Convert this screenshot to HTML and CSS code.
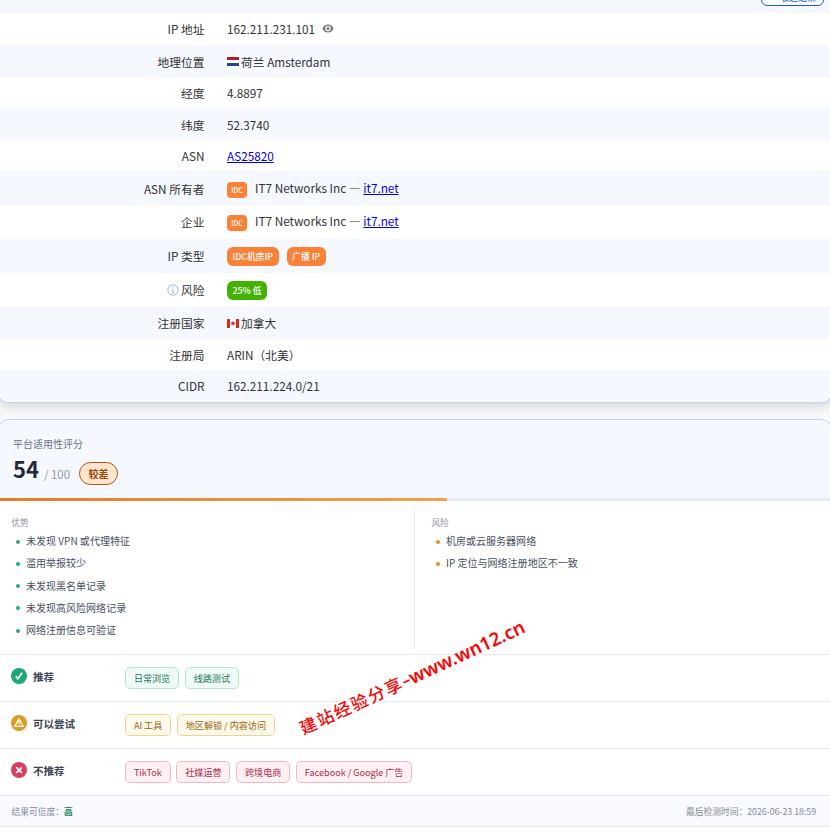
FILE: index.html
```html
<!DOCTYPE html>
<html lang="zh-CN">
<head>
<meta charset="utf-8">
<title>IP 信息</title>
<link rel="stylesheet" href="styles.css">
</head>
<body>
<section class="card info">
  <div class="topbar"><button class="top-btn"><span class="top-icon">✕</span>收起结果</button></div>
  <dl class="rows">
    <div class="row up"><dt>IP 地址</dt><dd>162.211.231.101<svg class="eye" viewBox="0 0 24 18"><path fill="#777" fill-rule="evenodd" d="M12 1C7 1 2.700 4.100 1 9c1.700 4.900 6 8 11 8s9.300-3.100 11-8c-1.700-4.900-6-8-11-8zm0 13.500a5.500 5.500 0 1 1 0-11 5.500 5.500 0 0 1 0 11zm0-2.500a3 3 0 1 0 0-6 3 3 0 0 0 0 6z"/></svg></dd></div>
    <div class="row"><dt>地理位置</dt><dd><svg class="flag" viewBox="0 0 12 9"><path fill="#ae1c28" d="M0 0h12v3H0z"/><path fill="#fff" d="M0 3h12v3H0z"/><path fill="#21468b" d="M0 6h12v3H0z"/></svg>荷兰 Amsterdam</dd></div>
    <div class="row short"><dt>经度</dt><dd>4.8897</dd></div>
    <div class="row"><dt>纬度</dt><dd>52.3740</dd></div>
    <div class="row short"><dt>ASN</dt><dd><a href="#">AS25820</a></dd></div>
    <div class="row tall"><dt>ASN 所有者</dt><dd class="owner"><span class="idc">IDC</span><span>IT7 Networks Inc — <a href="#">it7.net</a></span></dd></div>
    <div class="row tall up"><dt>企业</dt><dd class="owner"><span class="idc">IDC</span><span>IT7 Networks Inc — <a href="#">it7.net</a></span></dd></div>
    <div class="row tall up"><dt>IP 类型</dt><dd class="tags"><span class="tag">IDC机房IP</span><span class="tag">广播 IP</span></dd></div>
    <div class="row tall up"><dt><svg class="hint" viewBox="0 0 12 12"><circle cx="6" cy="6" r="5.200" fill="none" stroke="#82a4f8" stroke-width=".8"/><path d="M6 5v4M5 5h1M5 9h2" stroke="#82a4f8" stroke-width=".8"/><circle cx="6" cy="3" r=".6" fill="#82a4f8"/></svg>风险</dt><dd><span class="tag low">25% 低</span></dd></div>
    <div class="row up"><dt>注册国家</dt><dd><svg class="flag ca" viewBox="0 0 12 9"><path fill="#fff" d="M0 0h12v9H0z"/><path fill="#d52b1e" d="M0 0h3v9H0zM9 0h3v9H9zM6 2l.7 1.300.8-.3-.1 1 1 .3-1.400 1.500H6.200V7h-.4V5.800H5L3.600 4.300l1-.3-.1-1 .8.300z"/></svg>加拿大</dd></div>
    <div class="row short"><dt>注册局</dt><dd>ARIN（北美）</dd></div>
    <div class="row up"><dt>CIDR</dt><dd>162.211.224.0/21</dd></div>
  </dl>
</section>

<section class="card score">
  <header class="score-head">
    <div class="score-title">平台适用性评分</div>
    <div class="score-line"><strong>54</strong><span class="of">/ 100</span><span class="grade">较差</span></div>
  </header>
  <div class="bar"><div class="fill"></div></div>
  <div class="reasons">
    <div class="col">
      <h3>优势</h3>
      <ul class="good"><li>未发现 VPN 或代理特征</li><li>滥用举报较少</li><li>未发现黑名单记录</li><li>未发现高风险网络记录</li><li>网络注册信息可验证</li></ul>
    </div>
    <div class="col risk">
      <h3>风险</h3>
      <ul class="warn"><li>机房或云服务器网络</li><li>IP 定位与网络注册地区不一致</li></ul>
    </div>
  </div>
  <div class="use">
    <div class="use-name"><svg class="badge" viewBox="0 0 16 16"><circle cx="8" cy="8" r="8" fill="#1fa774"/><path d="M4.800 8.400l2.100 2.300 4.200-6" fill="none" stroke="#fff" stroke-width="1.700"/></svg>推荐</div>
    <div class="chips green"><span>日常浏览</span><span>线路测试</span></div>
  </div>
  <div class="use">
    <div class="use-name"><svg class="badge" viewBox="0 0 16 16"><circle cx="8" cy="8" r="8" fill="#df9a20"/><path d="M8 3.800L3.800 11.400h8.400z" fill="none" stroke="#fff" stroke-width="1.300" stroke-linejoin="round"/><path d="M8 6v3M8 9.700v1" stroke="#fff" stroke-width="1.100"/></svg>可以尝试</div>
    <div class="chips yellow"><span>AI 工具</span><span>地区解锁 / 内容访问</span></div>
  </div>
  <div class="use">
    <div class="use-name"><svg class="badge" viewBox="0 0 16 16"><circle cx="8" cy="8" r="8" fill="#d8405f"/><path d="M5.300 5.300l5.600 5.600M10.900 5.300l-5.600 5.600" stroke="#fff" stroke-width="1.700"/></svg>不推荐</div>
    <div class="chips red"><span>TikTok</span><span>社媒运营</span><span>跨境电商</span><span>Facebook / Google 广告</span></div>
  </div>
  <footer class="foot"><div>结果可信度：<b>高</b></div><div>最后检测时间：2026-06-23 18:59</div></footer>
</section>
<div class="watermark"><span class="wm-cn">建站经验分享</span><span class="wm-dash">–</span><span class="wm-url">www.wn12.cn</span></div>
</body>
</html>
```
FILE: styles.css
```css
* { box-sizing: border-box; }
html { overflow: hidden; height: 831px; }
body {
  margin: 0;
  height: 831px;
  overflow: hidden;
  position: relative;
  background: #f8f9fa;
  font-family: "Noto Sans CJK SC", sans-serif;
  font-size: 11.750px;
  line-height: 18px;
  color: #333;
}
.card { margin: 0 -3px; border: 1px solid #c5d1fb; padding: 0 2px; }
.info {
  height: 403px;
  border-top: 0;
  border-radius: 0 0 12px 12px;
  background: #f5f8ff;
  overflow: hidden;
  box-shadow: 0 3px 12px rgba(0, 0, 0, .16);
}
.topbar { height: 13px; background: #f5f8ff; display: flex; justify-content: flex-end; padding-right: 6px; }
.top-btn {
  width: 63px;
  height: 22px;
  margin-top: -16px;
  padding: 0;
  border: 1px solid #1758e8;
  border-radius: 6px;
  background: #fff;
  color: #1758e8;
  font: 9px/26px "Noto Sans CJK SC", sans-serif;
}
.top-icon { color: #333; margin-right: 3px; }
.rows { margin: 0; }
.row { display: flex; align-items: center; height: 32px; padding-top: 1px; background: #fff; }
.row:nth-child(even) { background: #f5f8ff; }
.up { padding-top: 0; padding-bottom: 1px; }
.short { height: 31px; }
.tall { height: 34px; }
.row dt { width: 204.500px; display: flex; align-items: center; justify-content: flex-end; }
.row dd { margin: 0 0 0 22.500px; display: flex; align-items: center; }
a { color: #0000ee; }
.eye { width: 12px; height: 9px; margin-left: 7px; }
.flag { width: 12px; height: 9px; margin-right: 2px; }
.ca { margin-top: 2px; }
.hint { width: 12px; height: 12px; margin-right: 2px; }
.owner span:last-child { margin-top: -2px; }
.owner .idc { position: relative; top: 1px; }
.idc {
  width: 20px;
  height: 16px;
  margin-right: 8px;
  border-radius: 4px;
  background: #fa8137;
  color: #fff;
  font-size: 7px;
  font-weight: 500;
  line-height: 16px;
  text-align: center;
}
.tags { gap: 8px; }
.tag {
  height: 19px;
  padding: 0 5.500px;
  border-radius: 6px;
  background: #fa8137;
  color: #fff;
  font-size: 8.800px;
  font-weight: 500;
  line-height: 19px;
}
.row .tag { position: relative; top: 1px; }
.low { background: #43b303; }
.score { margin-top: 16px; height: 430px; border-radius: 12px 12px 0 0; background: linear-gradient(#f5f8ff 78px, #fff 78px); overflow: hidden; }
.score-head { height: 78px; padding: 16px 13px 0; }
.score-title { font-size: 10px; line-height: 16px; color: #6b7280; }
.score-line { display: flex; align-items: center; height: 37px; }
.score-line strong { margin-top: -5px; font-size: 22px; line-height: 30px; color: #1f2937; }
.of { margin: 6px 0 0 5px; font-size: 11.400px; color: #9298a7; }
.grade {
  width: 39px;
  height: 23px;
  margin: 6px 0 0 9px;
  border: 1px solid #b35309;
  border-radius: 12px;
  background: #ffe5ce;
  color: #9c4607;
  font-size: 10px;
  font-weight: 700;
  line-height: 22px;
  text-align: center;
}
.bar { height: 3px; background: #e7eaf2; }
.fill { width: 447px; height: 3px; background: linear-gradient(90deg, #e27d26, #f4a04b); }
.reasons { display: flex; height: 153px; padding: 5px 0; }
.col { width: 415px; padding: 8px 12px 8px 11.500px; border-right: 1px solid #e9ebf2; }
.risk { padding-left: 16.500px; border-right: 0; }
.col h3 { margin: 0; padding-top: 1px; font-size: 8.600px; font-weight: 400; line-height: 15px; color: #8b90a0; }
.col ul { margin: 0; padding: 0 0 0 4.500px; list-style: none; }
.col li { display: flex; align-items: center; height: 22.250px; font-size: 10.030px; color: #474f61; }
.col li::before { content: ""; width: 4px; height: 4px; margin: 1px 6px 0 0; border-radius: 50%; background: #2ba877; }
.warn li::before { background: #e48b2b; }
.use { display: flex; height: 47px; border-top: 1px solid #e7e9f0; padding-left: 11px; }
.use-name { width: 114px; height: 43px; display: flex; align-items: center; font-size: 10.500px; font-weight: 700; color: #3b4354; }
.badge { width: 16px; height: 16px; margin: -1px 6px 0 0; }
.chips { display: flex; gap: 5.700px; padding-top: 12px; }
.chips span { height: 22px; padding: 0 7.900px; border: 1px solid; border-radius: 5px; font-size: 9.080px; line-height: 21px; white-space: nowrap; }
.chips.green span { background: #effaf6; border-color: #b5e7d4; color: #18785a; }
.chips.yellow span { background: #fff9ea; border-color: #f0d592; color: #936414; }
.chips.red span { background: #fff0f3; border-color: #f1b6c4; color: #aa2c4a; }
.foot {
  display: flex;
  justify-content: space-between;
  height: 32px;
  padding: 7px 14px 0 11.500px;
  border-top: 1px solid #e7e9f0;
  border-bottom: 1px solid #e7e9f0;
  background: #f8faff;
  color: #858b99;
  font-size: 8.750px;
}
.foot b { color: #168761; }
.watermark {
  position: absolute;
  left: 290px;
  top: 663px;
  width: 244px;
  height: 28px;
  display: flex;
  align-items: center;
  justify-content: center;
  transform: rotate(-24.800deg);
  color: #fa0505;
  line-height: 28px;
  white-space: nowrap;
}
.wm-cn { font-size: 17px; font-weight: 500; letter-spacing: 1.700px; }
.wm-dash { width: 9px; font: 600 16px/28px "Noto Sans", sans-serif; text-align: center; }
.wm-url { font: 600 18.600px/28px "Noto Sans", sans-serif; }
```
